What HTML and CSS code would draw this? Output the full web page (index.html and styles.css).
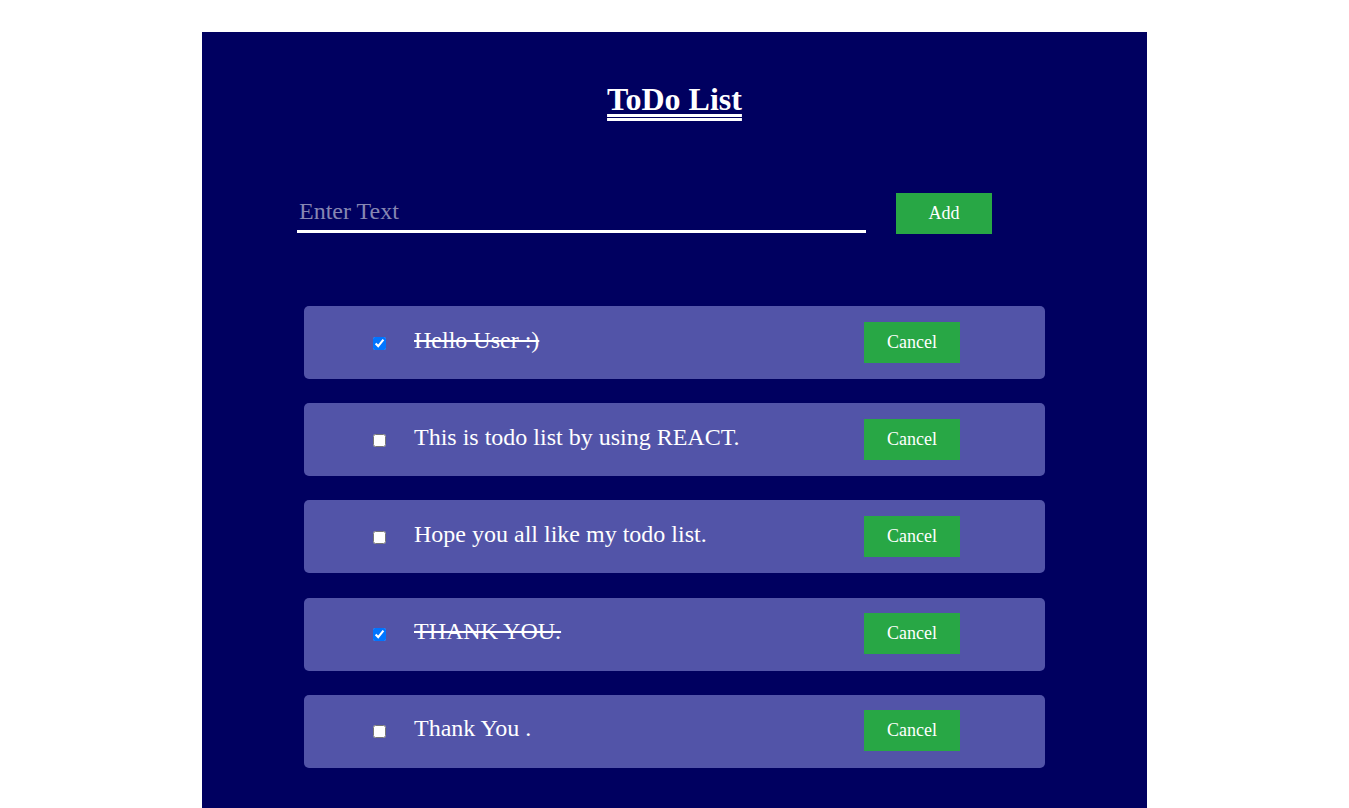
FILE: index.html
```html
<!DOCTYPE html>
<html>
<head>
<meta charset="utf-8">
<link rel="stylesheet" href="styles.css">
</head>
<body>
<div class="page">
  <div class="app">
    <h1 class="title">ToDo List</h1>
    <div class="entry">
      <input class="entry-input" type="text" placeholder="Enter Text">
      <button class="btn add-btn">Add</button>
    </div>
    <ul class="list">
      <li class="item"><input class="check" type="checkbox" checked><span class="text done">Hello User :)</span><button class="btn cancel-btn">Cancel</button></li>
      <li class="item"><input class="check" type="checkbox"><span class="text">This is todo list by using REACT.</span><button class="btn cancel-btn">Cancel</button></li>
      <li class="item"><input class="check" type="checkbox"><span class="text">Hope you all like my todo list.</span><button class="btn cancel-btn">Cancel</button></li>
      <li class="item"><input class="check" type="checkbox" checked><span class="text done">THANK YOU.</span><button class="btn cancel-btn">Cancel</button></li>
      <li class="item"><input class="check" type="checkbox"><span class="text">Thank You .</span><button class="btn cancel-btn">Cancel</button></li>
    </ul>
  </div>
</div>
</body>
</html>
```
FILE: styles.css
```css
html, body {
  margin: 0;
  padding: 0;
  background: #ffffff;
  font-family: "Liberation Serif", "Times New Roman", serif;
}
.page {
  padding-top: 32px;
  height: 776px;
  overflow: hidden;
}
.app {
  width: 945px;
  margin: 0 auto;
  background: #000060;
  min-height: 800px;
  padding-top: 1px;
  box-sizing: border-box;
}
.title {
  margin: 48px 0 0 0;
  text-align: center;
  color: #ffffff;
  font-size: 32px;
  font-weight: bold;
  line-height: 37px;
  text-decoration: underline double;
  text-underline-offset: 4px;
}
.entry {
  display: flex;
  align-items: flex-start;
  margin: 77px 0 0 95px;
}
.entry-input {
  width: 569px;
  height: 38px;
  box-sizing: border-box;
  background: transparent;
  border: none;
  border-bottom: 3px solid #ffffff;
  outline: none;
  color: #ffffff;
  font-family: "Liberation Serif", "Times New Roman", serif;
  font-size: 24px;
  padding: 0 2px 2px 2px;
  margin-top: 0;
}
.entry-input::placeholder {
  color: #8787b3;
}
.btn {
  background: #28a745;
  color: #ffffff;
  border: none;
  font-family: "Liberation Serif", "Times New Roman", serif;
  font-size: 18px;
  width: 96px;
  height: 41px;
  padding: 0;
  cursor: pointer;
}
.add-btn {
  margin-left: 30px;
  margin-top: -2px;
}
.list {
  list-style: none;
  margin: 72px 0 0 0;
  padding: 0;
}
.item {
  width: 741px;
  height: 73px;
  margin: 0 auto 24.2px auto;
  box-sizing: border-box;
  background: #5254a8;
  border-radius: 5px;
  display: flex;
  align-items: center;
  padding: 0 85px 0 69px;
}
.check {
  width: 13px;
  height: 13px;
  margin: 1px 0 0 0;
}
.text {
  flex: 1;
  margin-left: 28px;
  color: #ffffff;
  font-size: 24px;
  margin-top: -5px;
}
.text.done {
  text-decoration: line-through;
}
.cancel-btn {
  margin-top: -1px;
}
```
